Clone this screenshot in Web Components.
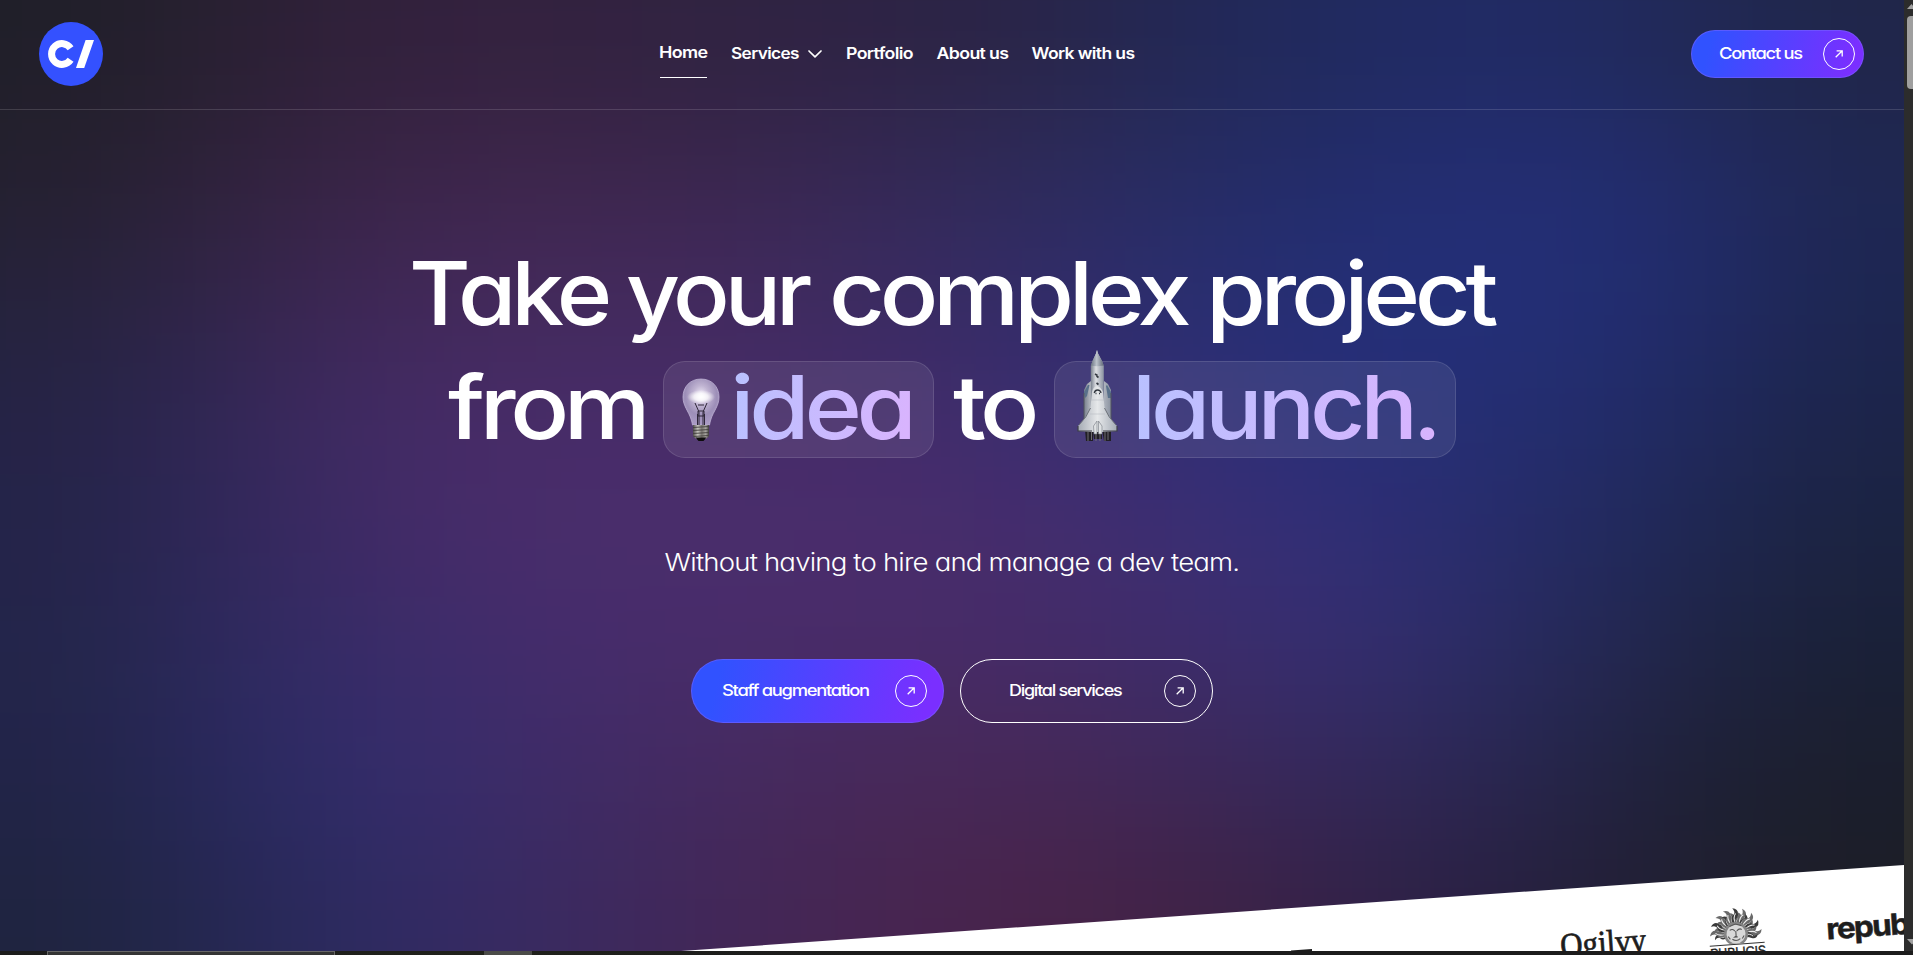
<!DOCTYPE html>
<html lang="en">
<head>
<meta charset="utf-8">
<title>C/ – From idea to launch</title>
<style>
html,body{margin:0;height:100%;overflow:hidden;background:#1c1c1c}
body{font-family:Inter,"Open Sans",sans-serif;color:#fff}
</style>
</head>
<body>
<app-shell></app-shell>
<script>
const define = (name, html, setup) => customElements.define(name, class extends HTMLElement {
  constructor() { super(); this.attachShadow({mode: 'open'}); }
  connectedCallback() {
    const t = document.createElement('template');
    t.innerHTML = typeof html === 'function' ? html(this) : html;
    this.shadowRoot.replaceChildren(t.content.cloneNode(true));
    if (setup) setup(this);
  }
});

/* A run of text set to an exact measure. w = ink width, l / r = side bearings, track = letter spacing in em. */
define('text-fit', el => {
  const a = (k, d) => +(el.getAttribute(k) ?? d);
  const w = a('w'), s = a('size', 16), l = a('l', 1), r = a('r', 1), g = el.hasAttribute('tint');
  const ls = a('track', s > 50 ? -.055 : s > 20 ? -.015 : -.035) * s;
  return `<style>:host{display:block;flex:none;width:${w}px;height:${s}px}
  svg{display:block;overflow:visible}
  text{font-family:Inter,"Open Sans",sans-serif;font-size:${s}px;font-weight:${a('weight', 500)};letter-spacing:${ls}px;font-feature-settings:"cv11","ss03"}</style>
  <svg width="${w}" height="${s}">${g ? `<defs><linearGradient id="g" gradientUnits="userSpaceOnUse" x1="0" y1="0" x2="${w}" y2="${s * .35}"><stop offset="0" stop-color="#b9c1ff"/><stop offset="1" stop-color="#d8b4fe"/></linearGradient></defs>` : ''}
  <text x="${-l}" y="${s * .84}" fill="${g ? 'url(#g)' : '#fff'}" textLength="${w + l + r + ls}" lengthAdjust="spacingAndGlyphs">${el.textContent}</text></svg>`;
});

/* Soft colour mesh behind the page */
const MESH = `201f29 2a2033 33213d 33223f 302341 2e2344 292547 222856 212a60 212b66 212958 202649
25202f 31223e 3c2549 3f264d 3b264e 352855 2e2b5b 262c64 222c6c 232e76 222c6c 1f2752
25233c 35254c 412859 442a5c 432a5e 3b2b61 322c68 292e70 232f78 233079 222c6e 1d2651
252346 33285a 452b66 482c69 472c69 452c69 3b2d70 312e76 272e78 242e72 212a63 1c2448
242449 32285d 432b68 4a2d6c 4a2d6c 4a2d6c 462c6c 3c2e73 302e77 262c69 202856 1b2340
23254a 2e2a61 3a2c6a 442c6b 482c6a 492b68 452b66 3c2c6a 352e70 292b60 202548 1a2036
222448 292960 352d6e 3f2b66 452a60 472958 472857 3d2858 33295a 282650 1f2138 1b1e2c
1f243f 262855 302b64 3b2a60 422757 472551 482349 402245 322148 272040 201f30 1c1e26`.split('\n').map(r => r.trim().split(/\s+/));
define('mesh-backdrop', () => {
  let cells = '';
  const cw = 159, ch = 119.5, clamp = (v, m) => Math.max(0, Math.min(m, v));
  for (let y = -3; y < 11; y++) for (let x = -3; x < 15; x++)
    cells += `<rect x="${x * cw}" y="${y * ch}" width="${cw + 1}" height="${ch + 1}" fill="#${MESH[clamp(y, 7)][clamp(x, 11)]}"/>`;
  return `<style>:host{position:absolute;inset:0;overflow:hidden}svg{display:block}</style>
  <svg width="1904" height="951"><defs><filter id="b" filterUnits="userSpaceOnUse" x="-460" y="-350" width="2820" height="1650" color-interpolation-filters="sRGB"><feGaussianBlur stdDeviation="88 66"/></filter></defs><g filter="url(#b)">${cells}</g></svg>`;
});

define('arrow-badge', `<style>:host{display:block;flex:none;width:32px;height:32px}svg{display:block}</style>
<svg width="32" height="32" fill="none" stroke="#fff"><circle cx="16" cy="16" r="15.5"/><path d="M12.7 19.3 19 13M13.6 12.8H19.2V18.4" stroke-width="1.3"/></svg>`);

define('pill-button', `<style>
:host{display:flex;flex:none;box-sizing:border-box;align-items:center;justify-content:space-between;width:253px;height:64px;border-radius:32px;padding:0 16px 0 31px;border:1px solid #fff}
:host([kind=primary]){border-color:rgba(120,100,255,.55);background:linear-gradient(105deg,#3152ff 12%,#7a2fff 92%) border-box}
:host([kind=outline]){padding-left:48.5px}
:host([small]){width:173px;height:48px;padding:0 8px 0 27.5px}
</style><slot></slot><arrow-badge></arrow-badge>`);

define('brand-logo', `<style>:host{display:block;width:64px;height:64px}svg{display:block}</style>
<svg width="64" height="64"><circle cx="32" cy="32" r="32" fill="#3451ff"/>
<path d="M31.6 26.2A10.4 10.4 0 1 0 31.6 37.8" fill="none" stroke="#fff" stroke-width="7"/>
<path d="M46.6 18H55L45.2 46H37Z" fill="#fff"/></svg>`);

define('nav-item', `<style>:host{display:flex;flex:none;align-items:center;height:48px;gap:10px;box-sizing:border-box}
:host([active]){border-bottom:1px solid #fff}
svg{display:none;overflow:visible}:host([menu]) svg{display:block}</style>
<slot></slot><svg width="14" height="8"><path d="M1 1 7 6.8 13 1" fill="none" stroke="#fff" stroke-width="1.7" stroke-linecap="round" stroke-linejoin="round"/></svg>`);

define('site-header', `<style>
:host{display:flex;position:relative;box-sizing:border-box;height:110px;padding:0 40px 2px 39px;align-items:center;justify-content:space-between;border-bottom:1px solid rgba(255,255,255,.14)}
nav{display:flex;align-items:center;gap:24.5px}
</style>
<brand-logo></brand-logo>
<nav>
<nav-item active><text-fit w="47" weight="560">Home</text-fit></nav-item>
<nav-item menu><text-fit w="66.5" weight="560">Services</text-fit></nav-item>
<nav-item><text-fit w="65.5" weight="560">Portfolio</text-fit></nav-item>
<nav-item><text-fit w="71" l=".5" weight="560">About us</text-fit></nav-item>
<nav-item><text-fit w="102" l=".5" weight="560">Work with us</text-fit></nav-item>
</nav>
<pill-button kind="primary" small><text-fit w="82" track="-.07" weight="540">Contact us</text-fit></pill-button>`);

define('bulb-art', `<style>:host{display:block;width:38px;height:64px;flex:none}svg{display:block;overflow:visible}</style>
<svg width="38" height="64"><defs>
<radialGradient id="a" cx=".5" cy=".36" r=".62"><stop offset="0" stop-color="#f4effb"/><stop offset=".35" stop-color="#c0b4d2"/><stop offset=".7" stop-color="#9d8fb8"/><stop offset="1" stop-color="#a99ac3"/></radialGradient>
<radialGradient id="w"><stop offset="0" stop-color="#fff"/><stop offset=".5" stop-color="#fff" stop-opacity=".75"/><stop offset="1" stop-color="#fff" stop-opacity="0"/></radialGradient>
<linearGradient id="m"><stop offset="0" stop-color="#4c4a48"/><stop offset=".3" stop-color="#c9c7c2"/><stop offset=".55" stop-color="#77746f"/><stop offset=".8" stop-color="#aaa8a3"/><stop offset="1" stop-color="#3c3a39"/></linearGradient></defs>
<path d="M19 1C8 1 1 9 1 19 1 28 6.500 33 9 41Q10 44 10.500 47H27.500Q28 44 29 41C31.500 33 37 28 37 19 37 9 30 1 19 1Z" fill="url(#a)" stroke="#bdb0d3" stroke-width=".8"/>
<ellipse cx="19" cy="19" rx="14" ry="7" fill="url(#w)"/>
<path d="M13 25 17 34V47M25 25 21 34V47M15.500 47V36M22.500 47V36M16 27H22M16 33H22V38H16Z" fill="none" stroke="#2e2638" stroke-width="1"/>
<path d="M11 47H27V58Q25 60.500 23 61H15Q13 60.500 11 58Z" fill="url(#m)"/>
<path d="M11 49.500 27 48.500M11 52.500 27 51.500M11 55.500 27 54.500M11.500 58.500 26.500 57.500" stroke="#44413e" stroke-width=".9"/>
<path d="M13.500 59.500H24.500L21.500 63H16.500Z" fill="#0e0d0d"/></svg>`);

define('shuttle-art', `<style>:host{display:block;width:40px;height:94px;flex:none}svg{display:block;overflow:visible}</style>
<svg width="40" height="94"><defs>
<linearGradient id="t"><stop offset="0" stop-color="#777f8c"/><stop offset=".4" stop-color="#dddfe3"/><stop offset="1" stop-color="#8a92a0"/></linearGradient>
<linearGradient id="n"><stop offset="0" stop-color="#687180"/><stop offset=".45" stop-color="#bcc3cb"/><stop offset="1" stop-color="#5f6777"/></linearGradient>
<linearGradient id="o"><stop offset="0" stop-color="#a5abb4"/><stop offset=".5" stop-color="#e6e8ea"/><stop offset="1" stop-color="#a4abb5"/></linearGradient></defs>
<path d="M7 80H15V91H8ZM24 80H33V91H26ZM15 81H24V89H16Z" fill="#211f25"/>
<path d="M10 82V91M13.500 82V90M18 83V91M22 83V91M27 82V91M30 82V90" stroke="#77747a" stroke-width=".9"/>
<path d="M6 40 9 34 13 31V78H6ZM33 40 30 34 26 31V78H33Z" fill="url(#t)"/>
<path d="M6 42 10 35 11.500 35 9 46 7 48ZM33 42 29 35 28 36 30 48H33Z" fill="#58708a"/>
<path d="M6 43V74M33 43V74" stroke="#51545c"/>
<path d="M12.800 16 14.500 11 18 3.500 19 0 20 3.500 24 11 25.800 16V74H12.800Z" fill="url(#t)"/>
<path d="M12.800 15.500 14.500 11 18 3.500 19 0 20 3.500 24 11 25.800 15.500Q19 17 12.800 15.500Z" fill="url(#n)"/>
<path d="M14 42Q15 37 19 36 23 37 25 42L26.500 57Q30 67 39 76V81L25 82H14L0 81V76Q9 67 12.500 57Z" fill="url(#o)"/>
<path d="M0 76V81H14M39 76V81H25" fill="none" stroke="#3d3f46" stroke-width="1.200"/>
<path d="M12.500 58Q9 67 1 75M26.500 58Q30 67 38 75" fill="none" stroke="#6b7078"/>
<path d="M19 71V84H16L15.500 76ZM20.500 71V84H24V76Z" fill="#dfe2e4" stroke="#747982" stroke-width=".6"/>
<path d="M17 24 19.500 25.500M18.500 26 20.500 27.500M18.500 33 20.500 34.500" stroke="#333840" stroke-width="1.600"/><path d="M16.200 43Q17 40 19.500 40 22.500 40 23 43M17.500 43.500H18.500M21 43.500H22" stroke="#333840" fill="none" stroke-width="1.300"/>
<path d="M13 50H26M12 64H27" stroke="#b8bdc4" stroke-width=".6"/></svg>`);

define('glass-chip', `<style>:host{display:flex;flex:none;box-sizing:border-box;height:97px;align-items:center;border:1px solid rgba(255,255,255,.12);border-radius:22px;background:rgba(255,255,255,.08)}</style><slot></slot>`);

define('hero-banner', `<style>
:host{display:flex;position:relative;flex-direction:column;align-items:center;padding-top:141.400px}
.row{display:flex;align-items:center}
.one{margin-left:4px}
.two{margin-top:21.600px;gap:20px}
glass-chip.i{width:271px;padding-left:18.500px}
glass-chip.l{width:402px;padding-left:23.500px;margin-left:-1px}
bulb-art{margin:1px 15.500px 0 0}
shuttle-art{margin:-25px 20px 0 0}
.sub{margin-top:92.800px;margin-left:-1px}
.cta{display:flex;gap:16px;margin-top:84.200px}
</style>
<div class="row one">
<text-fit size="88" w="196" l="3" r="4" weight="510">Take</text-fit>
<text-fit size="88" w="185" l="1" r="0" weight="510" style="margin-left:19px">your</text-fit>
<text-fit size="88" w="357" l="4" r="1" weight="510" style="margin-left:21px">complex</text-fit>
<text-fit size="88" w="283" l="7" r="2" weight="510" style="margin-left:23px">project</text-fit>
</div>
<div class="row two">
<text-fit size="88" w="194" l="1" r="7" weight="510">from</text-fit>
<glass-chip class="i"><bulb-art></bulb-art><text-fit tint size="88" w="175.500" l="6" r="5" weight="510">idea</text-fit></glass-chip>
<text-fit size="88" w="81" l="1" r="4" weight="510">to</text-fit>
<glass-chip class="l"><shuttle-art></shuttle-art><text-fit tint size="88" w="297.500" l="6" r="6" weight="510">launch.</text-fit></glass-chip>
</div>
<text-fit class="sub" size="24" w="573" l=".5" r="2" track="-.03" weight="340">Without having to hire and manage a dev team.</text-fit>
<div class="cta">
<pill-button kind="primary"><text-fit w="146" track="-.07" weight="540">Staff augmentation</text-fit></pill-button>
<pill-button kind="outline"><text-fit w="111.500" track="-.07" weight="540">Digital services</text-fit></pill-button>
</div>`);

/* Slanted white strip with client logos */
define('client-strip', () => {
  let rays = '';
  for (let i = 0; i < 19; i++) {
    const a = -188 + i * 10.9, k = i % 2 ? 1 : .84;
    rays += `<g transform="rotate(${a}) scale(${k})"><path d="M11 -2.600Q17 -4.500 19 -1.500 21.500 1.500 26 -2 25 4 20 3.500 16 2.500 11 2.600Z" fill="${i % 3 ? '#6a6a6a' : '#3a3a3a'}"/><path d="M11 0Q17 -2 20.500 1" stroke="#eee" fill="none" stroke-width="1.1"/></g>`;
  }
  return `<style>:host{position:absolute;left:0;bottom:0;width:1904px;height:90px;overflow:hidden}svg{display:block}</style>
  <svg width="1904" height="90" viewBox="0 861 1904 90"><path d="M681 951 1904 865V951Z" fill="#fff"/>
  <path d="M1291 950.600 1312 949V951H1291Z" fill="#1b1b1b"/>
  <g fill="#1d1d1d">
  <text transform="translate(1561 957) rotate(-4)" font-family="Liberation Serif,serif" font-size="34" stroke="#1d1d1d" stroke-width=".7" textLength="86" lengthAdjust="spacingAndGlyphs">Ogilvy</text>
  <g transform="translate(1736 934) rotate(-4)">${rays}<circle r="12" fill="#858585"/><circle r="9.500" fill="#d8d8d8"/>
  <path d="M-6-4Q-3-6-1-3M1-3Q4-6 6-4M0-3V2L-1.500 3H1.500M-4 5Q0 8 4 5M-8 2-6 5M8 2 6 5M-6-8 0-10 6-8" stroke="#555" stroke-width="1.100" fill="none"/>
  <path d="M-28 9.500H28V30H-28Z" fill="#fff"/><path d="M-27 10.300H28" stroke="#333" stroke-width="1"/>
  <text x="-27" y="23" font-family="Liberation Sans,sans-serif" font-size="14" stroke="#1d1d1d" stroke-width=".4" textLength="56" lengthAdjust="spacingAndGlyphs">PUBLICIS</text></g>
  <text transform="translate(1827 939.500) rotate(-4)" font-family="Inter,sans-serif" font-weight="700" font-size="29" stroke="#1d1d1d" stroke-width=".5" letter-spacing="-1.5" textLength="113" lengthAdjust="spacingAndGlyphs">republic</text>
  </g></svg>`;
});

define('window-scrollbar', `<style>:host{display:block;position:relative;background:#2c2c2c;overflow:hidden}svg{display:block}</style>
<svg width="9" height="951"><path d="M3 9 7.500 4 12 9Z" fill="#a0a0a0"/><rect x="3" y="16" width="12" height="73" rx="4" fill="#9f9f9f"/><path d="M3 939H13L8 944.500Z" fill="#a0a0a0"/></svg>`);

define('desktop-edge', `<style>:host{display:flex;grid-column:1/3;background:linear-gradient(90deg,#1c1c1c,#20211b 25%,#1c1c1c 45%);height:4px;padding-left:47px}
.box{box-sizing:border-box;width:288px;height:4px;border:1px solid #666;border-bottom:0;background:#343434}.tab{width:48px;margin-left:149px;background:#4b4b48}</style><div class="box"></div><div class="tab"></div>`);

define('app-shell', `<style>
:host{display:grid;grid-template-columns:1904px 9px;grid-template-rows:951px 4px;width:1913px;height:955px}
main{position:relative;overflow:hidden}
</style>
<main><mesh-backdrop></mesh-backdrop><site-header></site-header><hero-banner></hero-banner><client-strip></client-strip></main>
<window-scrollbar></window-scrollbar>
<desktop-edge></desktop-edge>`);
</script>
</body>
</html>
